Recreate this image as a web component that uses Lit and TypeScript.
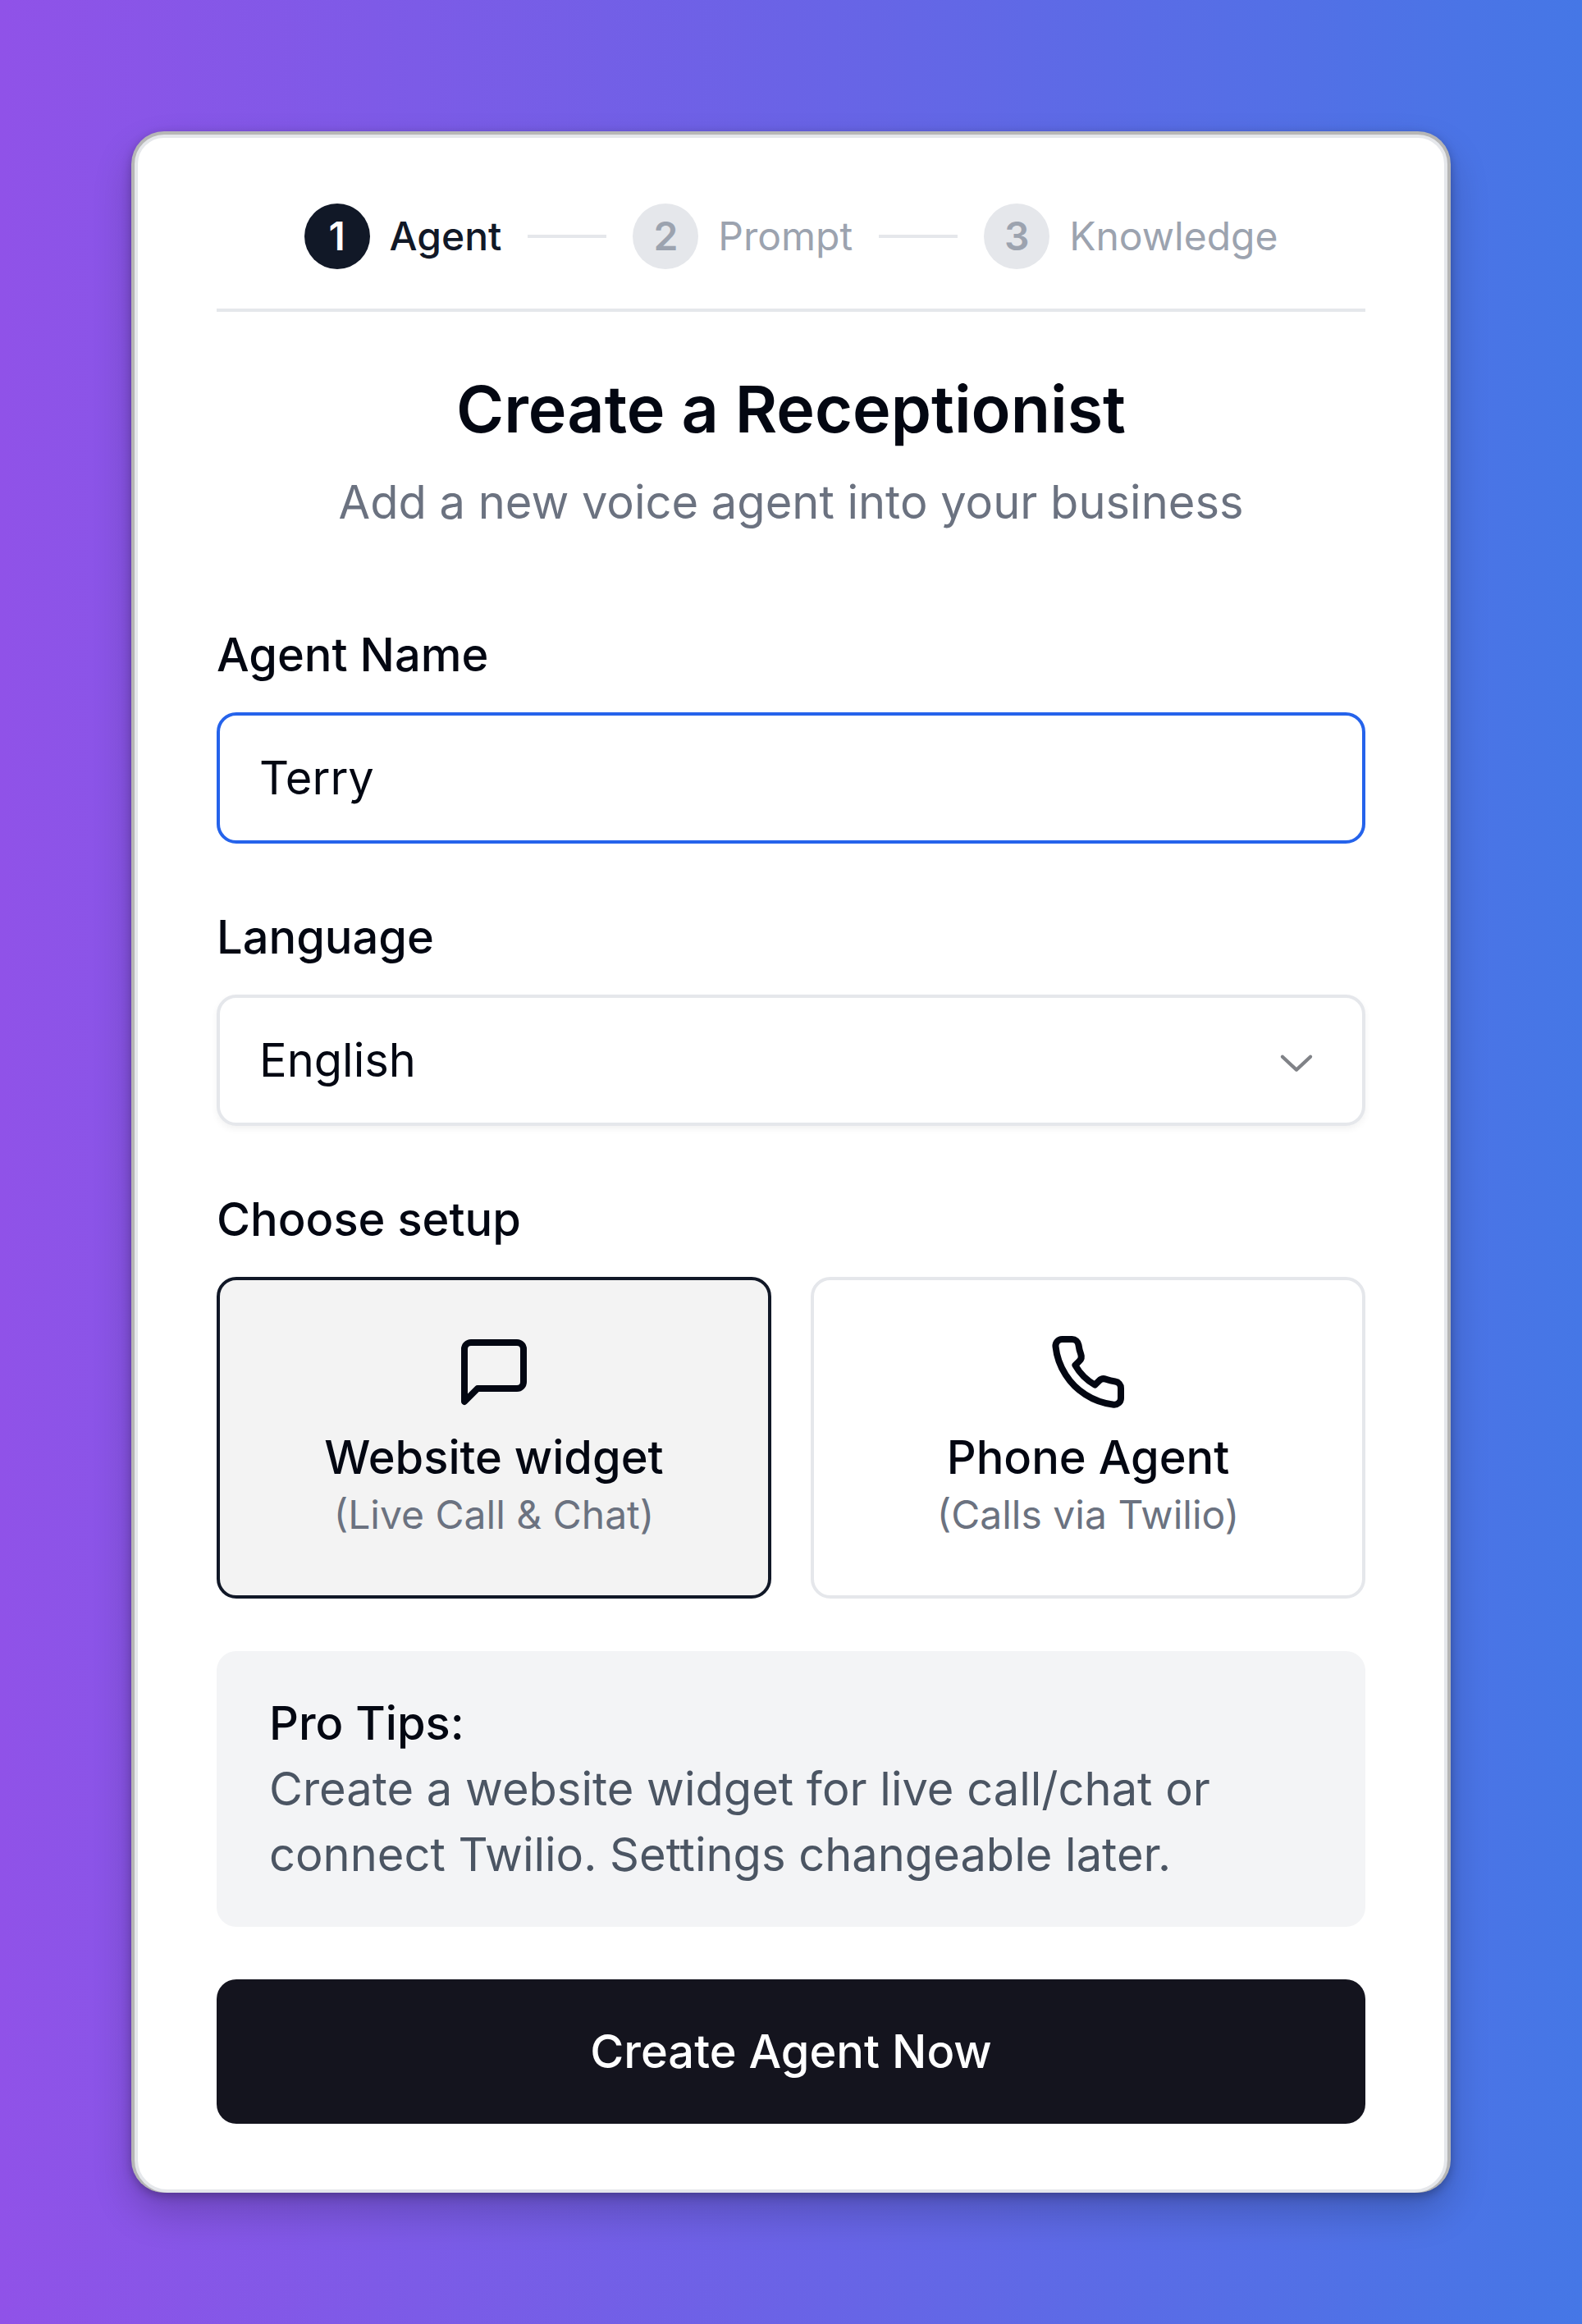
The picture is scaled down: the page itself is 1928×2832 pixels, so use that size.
import { LitElement, html, css, svg, type TemplateResult } from "lit";
import { customElement, state } from "lit/decorators.js";
import { classMap } from "lit/directives/class-map.js";

interface SetupOption {
  id: string;
  title: string;
  note: string;
  icon: TemplateResult;
}

const STEPS = ["Agent", "Prompt", "Knowledge"];

const SETUPS: SetupOption[] = [
  {
    id: "widget",
    title: "Website widget",
    note: "(Live Call & Chat)",
    icon: svg`<path d="M21 15a2 2 0 0 1-2 2H7l-4 4V5a2 2 0 0 1 2-2h14a2 2 0 0 1 2 2z" />`,
  },
  {
    id: "phone",
    title: "Phone Agent",
    note: "(Calls via Twilio)",
    icon: svg`<path d="M22 16.92v3a2 2 0 0 1-2.18 2 19.79 19.79 0 0 1-8.63-3.07 19.5 19.5 0 0 1-6-6 19.79 19.79 0 0 1-3.07-8.67A2 2 0 0 1 4.11 2h3a2 2 0 0 1 2 1.72 12.84 12.84 0 0 0 .7 2.81 2 2 0 0 1-.45 2.11L8.09 9.91a16 16 0 0 0 6 6l1.27-1.27a2 2 0 0 1 2.11-.45 12.84 12.84 0 0 0 2.81.7A2 2 0 0 1 22 16.92z" />`,
  },
];

@customElement("app-root")
export class AppRoot extends LitElement {
  @state() private setup = "widget";

  static styles = css`
    :host {
      display: block;
      font-family: Inter, "Liberation Sans", sans-serif;
      font-size: 56px;
      line-height: 80px;
      color: #030712;
    }
    * {
      box-sizing: border-box;
    }
    h1,
    p,
    ol {
      margin: 0;
      padding: 0;
    }
    .page {
      min-height: 100vh;
      padding: 160px;
      background: linear-gradient(90deg, #9052e8, #6a63e6 50%, #4577e6);
    }
    .card {
      border: 4px solid #b6b6b6;
      border-bottom: 0;
      border-radius: 40px;
      background: #b6b6b6;
      box-shadow: 0 24px 48px rgba(0, 0, 0, 0.2), 0 4px 12px rgba(0, 0, 0, 0.25);
    }
    .panel {
      padding: 80px 96px;
      border: 4px solid #e5e7eb;
      border-radius: 36px 36px 40px 40px;
      background: #fff;
    }
    .steps {
      display: flex;
      align-items: center;
      justify-content: center;
      gap: 32px;
      padding-bottom: 48px;
      border-bottom: 4px solid #e5e7eb;
      list-style: none;
      font-size: 48px;
      color: #9ca3af;
    }
    .step {
      display: flex;
      align-items: center;
      gap: 24px;
    }
    .step.current {
      color: #111827;
      font-weight: 500;
    }
    .number {
      display: grid;
      place-items: center;
      width: 80px;
      height: 80px;
      border-radius: 50%;
      background: #e5e7eb;
      font-weight: 600;
    }
    .current .number {
      background: #111827;
      color: #fff;
    }
    .connector {
      width: 96px;
      height: 4px;
      background: #e5e7eb;
    }
    .intro {
      display: grid;
      gap: 34px;
      padding: 78px 0 32px;
      text-align: center;
    }
    .title {
      font-size: 79px;
      font-weight: 600;
    }
    .subtitle {
      color: #6b7280;
    }
    .field {
      display: grid;
      gap: 40px;
      padding-top: 84px;
    }
    .label {
      line-height: 60px;
      font-weight: 500;
    }
    .control {
      width: 100%;
      height: 160px;
      padding: 0 48px;
      border: 4px solid #e5e7eb;
      border-radius: 24px;
      outline: none;
      appearance: none;
      background: #fff;
      color: inherit;
      font: inherit;
    }
    .control.active {
      border-color: #2563eb;
    }
    .select-wrap {
      display: grid;
      align-items: center;
    }
    .select-wrap > * {
      grid-area: 1 / 1;
    }
    .select-wrap .control {
      box-shadow: 0 4px 8px rgba(0, 0, 0, 0.05);
    }
    .chevron {
      justify-self: end;
      width: 64px;
      height: 64px;
      margin-right: 52px;
      opacity: 0.5;
      pointer-events: none;
    }
    .options {
      display: grid;
      grid-template-columns: 1fr 1fr;
      gap: 48px;
    }
    .option {
      display: flex;
      flex-direction: column;
      align-items: center;
      padding: 64px 32px 68px;
      border: 4px solid #e5e7eb;
      border-radius: 24px;
      background: #fff;
      color: inherit;
      font: inherit;
      font-weight: 500;
      cursor: pointer;
    }
    .option.selected {
      border-color: #111827;
      background: #f3f3f3;
    }
    .icon {
      width: 96px;
      height: 96px;
      margin-bottom: 16px;
      fill: none;
      stroke: currentColor;
      stroke-width: 2;
      stroke-linecap: round;
      stroke-linejoin: round;
    }
    .note {
      font-size: 48px;
      font-weight: 400;
      line-height: 60px;
      color: #6b7280;
    }
    .tips {
      margin: 64px 0;
      padding: 48px 64px;
      border-radius: 24px;
      background: #f3f4f6;
      color: #4b5563;
    }
    .tips-title {
      font-weight: 500;
      color: #030712;
    }
    .submit {
      display: block;
      width: 100%;
      height: 176px;
      border: 0;
      border-radius: 24px;
      background: #14141e;
      color: #fff;
      font: inherit;
      font-weight: 500;
      cursor: pointer;
    }
  `;

  private renderStep(name: string, index: number) {
    return html`
      ${index > 0 ? html`<li class="connector" role="presentation"></li>` : ""}
      <li class=${classMap({ step: true, current: index === 0 })}>
        <span class="number">${index + 1}</span>
        <span>${name}</span>
      </li>
    `;
  }

  private renderOption(option: SetupOption) {
    const selected = this.setup === option.id;
    return html`
      <button
        type="button"
        class=${classMap({ option: true, selected })}
        aria-pressed=${selected ? "true" : "false"}
        @click=${() => (this.setup = option.id)}
      >
        <svg class="icon" viewBox="0 0 24 24" aria-hidden="true">${option.icon}</svg>
        <span>${option.title}</span>
        <span class="note">${option.note}</span>
      </button>
    `;
  }

  render() {
    return html`
      <main class="page">
        <div class="card">
          <form class="panel" @submit=${(e: Event) => e.preventDefault()}>
            <ol class="steps">
              ${STEPS.map((name, i) => this.renderStep(name, i))}
            </ol>
            <header class="intro">
              <h1 class="title">Create a Receptionist</h1>
              <p class="subtitle">Add a new voice agent into your business</p>
            </header>
            <div class="field">
              <label class="label" for="name">Agent Name</label>
              <input class="control active" id="name" type="text" value="Terry" />
            </div>
            <div class="field">
              <label class="label" for="language">Language</label>
              <div class="select-wrap">
                <select class="control" id="language">
                  <option>English</option>
                </select>
                <svg class="chevron" viewBox="0 0 15 15" fill="currentColor" aria-hidden="true">
                  <path
                    d="M3.13523 6.15803C3.3241 5.95657 3.64052 5.94637 3.84197 6.13523L7.5 9.56464L11.158 6.13523C11.3595 5.94637 11.6759 5.95657 11.8648 6.15803C12.0536 6.35949 12.0434 6.67591 11.842 6.86477L7.84197 10.6148C7.64964 10.7951 7.35036 10.7951 7.15803 10.6148L3.15803 6.86477C2.95657 6.67591 2.94637 6.35949 3.13523 6.15803Z"
                  />
                </svg>
              </div>
            </div>
            <div class="field" role="group" aria-labelledby="setup-label">
              <span class="label" id="setup-label">Choose setup</span>
              <div class="options">${SETUPS.map((o) => this.renderOption(o))}</div>
            </div>
            <section class="tips">
              <p class="tips-title">Pro Tips:</p>
              <p>Create a website widget for live call/chat or connect Twilio. Settings changeable later.</p>
            </section>
            <button class="submit" type="submit">Create Agent Now</button>
          </form>
        </div>
      </main>
    `;
  }
}
